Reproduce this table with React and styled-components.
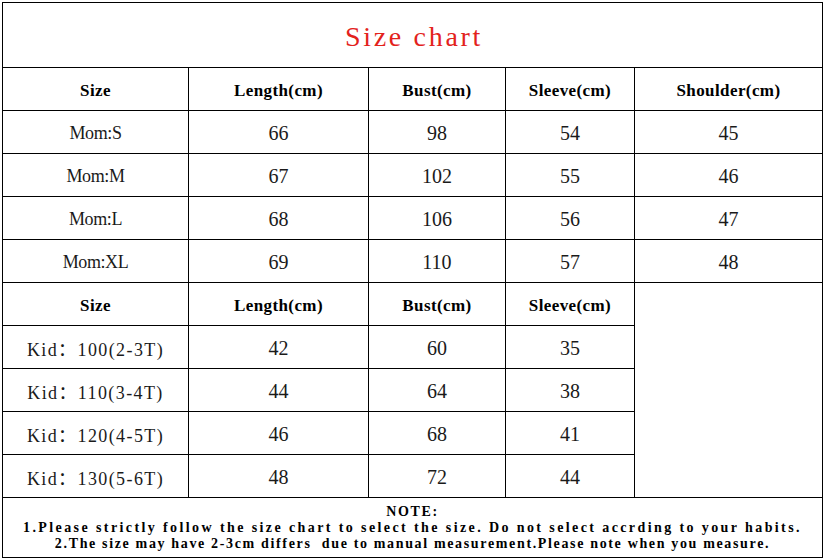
import React from "react";
import styled, { createGlobalStyle } from "styled-components";

const Global = createGlobalStyle`
  html, body { margin: 0; padding: 0; background: #ffffff; }
  body { width: 825px; height: 560px; overflow: hidden; }
`;

const Page = styled.div`
  padding: 2px 0 0 2px;
`;

const Sheet = styled.div`
  display: grid;
  grid-template-columns: 186px 180px 137px 129px 188px;
  grid-template-rows: 65px repeat(10, 43px) 60px;
  width: 821px;
  border-left: 1px solid #000;
  border-top: 1px solid #000;
  box-sizing: border-box;
  color: #111;
  font-family: "Liberation Serif", "Noto Sans CJK SC", serif;
`;

const Cell = styled.div`
  box-sizing: border-box;
  border-right: 1px solid #000;
  border-bottom: 1px solid #000;
  display: flex;
  align-items: center;
  justify-content: center;
  white-space: pre;
`;

const TitleCell = styled(Cell)`
  grid-column: 1 / -1;
  padding: 4px 0 0 3px;
  font-size: 28px;
  letter-spacing: 2.7px;
  color: #e3221c;
`;

const HeadCell = styled(Cell)`
  padding-top: 3px;
  font-weight: bold;
  font-size: 17px;
  letter-spacing: 0.4px;
  color: #000;
`;

const LabelCell = styled(Cell)`
  padding-top: 2px;
  font-size: 18px;
  letter-spacing: ${(p) => p.$tracking}px;
  color: #1a1a1a;
`;

const NumCell = styled(Cell)`
  padding-top: 2px;
  font-size: 20px;
  color: #1a1a1a;
`;

const BlankCell = styled(Cell)`
  grid-column: 5;
  grid-row: 7 / span 5;
`;

const NoteCell = styled(Cell)`
  grid-column: 1 / -1;
  grid-row: 12;
  flex-direction: column;
  padding-top: 1px;
  font-weight: bold;
  font-size: 14px;
  line-height: 16px;
  color: #000;
`;

const NoteLine = styled.div`
  text-align: center;
  letter-spacing: ${(p) => p.$tracking}px;
`;

const momHead = ["Size", "Length(cm)", "Bust(cm)", "Sleeve(cm)", "Shoulder(cm)"];
const momRows = [
  ["Mom:S", "66", "98", "54", "45"],
  ["Mom:M", "67", "102", "55", "46"],
  ["Mom:L", "68", "106", "56", "47"],
  ["Mom:XL", "69", "110", "57", "48"],
];
const kidHead = ["Size", "Length(cm)", "Bust(cm)", "Sleeve(cm)"];
const kidRows = [
  ["Kid：100(2-3T)", "42", "60", "35"],
  ["Kid：110(3-4T)", "44", "64", "38"],
  ["Kid：120(4-5T)", "46", "68", "41"],
  ["Kid：130(5-6T)", "48", "72", "44"],
];

function Row({ cells, tracking }) {
  return cells.map((c, i) =>
    i === 0 ? (
      <LabelCell key={i} $tracking={tracking}>
        {c}
      </LabelCell>
    ) : (
      <NumCell key={i}>{c}</NumCell>
    )
  );
}

export default function App() {
  return (
    <Page>
      <Global />
      <Sheet>
        <TitleCell>Size chart</TitleCell>
        {momHead.map((h) => (
          <HeadCell key={"m" + h}>{h}</HeadCell>
        ))}
        {momRows.map((r) => (
          <Row key={r[0]} cells={r} tracking={-0.4} />
        ))}
        {kidHead.map((h) => (
          <HeadCell key={"k" + h}>{h}</HeadCell>
        ))}
        <BlankCell />
        {kidRows.map((r) => (
          <Row key={r[0]} cells={r} tracking={1.4} />
        ))}
        <NoteCell>
          <NoteLine $tracking={1.6}>NOTE:</NoteLine>
          <NoteLine $tracking={2.4}>1.Please strictly follow the size chart to select the size. Do not select accrding to your habits.</NoteLine>
          <NoteLine $tracking={1.65}>2.The size may have 2-3cm differs  due to manual measurement.Please note when you measure.</NoteLine>
        </NoteCell>
      </Sheet>
    </Page>
  );
}
